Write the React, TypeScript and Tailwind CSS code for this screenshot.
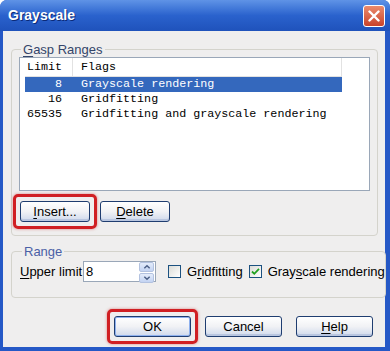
import React from "react";

const ui = "font-['Liberation_Sans',Arial,sans-serif]";
const mono = "font-['Liberation_Mono','Courier_New',monospace]";

function XpButton({ label, u, rest, isDefault }: { label?: string; u?: string; rest?: string; isDefault?: boolean }) {
  return (
    <button
      className={`h-[21px] rounded-[3px] border border-[#1f3d70] bg-gradient-to-b from-[#ffffff] via-[#f1f2f5] to-[#cfd9ec] text-[13px] leading-none text-black ${
        isDefault ? "shadow-[inset_0_0_0_1px_#8fb1ee]" : "shadow-[inset_0_-2px_0_#b9c6e0]"
      }`}
    >
      {u ? <span className="underline underline-offset-2">{u}</span> : null}
      {rest}
      {label}
    </button>
  );
}

// red annotation frame drawn over a button
function Marked({ children }: { children: React.ReactNode }) {
  return (
    <div className="relative flex">
      {children}
      <div className="pointer-events-none absolute -inset-x-[7px] -inset-y-[7px] rounded-[5px] border-[3px] border-[#d01f23] shadow-[0_0_3px_rgba(200,20,20,0.5)]" />
    </div>
  );
}

function Check({ checked }: { checked?: boolean }) {
  return (
    <span className="flex h-[13px] w-[13px] items-center justify-center border border-[#1c5180] bg-gradient-to-br from-[#dcdcd7] to-[#ffffff]">
      {checked && (
        <svg width="9" height="9" viewBox="0 0 9 9">
          <path d="M1 4.5 L3.3 6.8 L8 1.8" fill="none" stroke="#21a121" strokeWidth="1.8" />
        </svg>
      )}
    </span>
  );
}

export default function App() {
  const rows = [
    { limit: "8", flags: "Grayscale rendering", sel: true },
    { limit: "16", flags: "Gridfitting" },
    { limit: "65535", flags: "Gridfitting and grayscale rendering" },
  ];

  return (
    <div className={`${ui} h-[351px] w-[390px] bg-white`}>
      <div className="flex h-full w-full flex-col rounded-t-[7px] bg-[#2558c6]">
        {/* title bar */}
        <div className="flex h-[31px] items-center justify-between rounded-t-[7px] bg-gradient-to-b from-[#5f93e6] via-[#2a62cd] to-[#1f52bb] pl-[8px] pr-[5px]">
          <span className="text-[14px] font-bold text-white [text-shadow:1px_1px_0_#0b2a78]">Grayscale</span>
          <span className="flex h-[22px] w-[22px] items-center justify-center rounded-[3px] border border-white bg-gradient-to-b from-[#ea8a6c] to-[#c9422a]">
            <svg width="12" height="12" viewBox="0 0 12 12">
              <path d="M1.5 1.5 L10.5 10.5 M10.5 1.5 L1.5 10.5" stroke="white" strokeWidth="2.4" strokeLinecap="round" />
            </svg>
          </span>
        </div>

        {/* client area */}
        <div className="mx-[3px] mb-[4px] mr-[5px] flex flex-1 flex-col bg-[#efeeee] px-[8px] pt-[11px] pb-[9px] text-[13px] text-black">
          <fieldset className="mr-[-1px] rounded-[4px] border border-[#d4d3cc] px-[7px] pb-[13px]">
            <legend className="ml-[2px] px-[2px] leading-[15px] text-[#34456a]">
              <span className="underline underline-offset-2">G</span>asp Ranges
            </legend>
            <div className={`${mono} h-[134px] border border-[#9aa7b8] bg-white pl-[5px] text-[11.7px]`}>
              <div className="flex h-[19px] w-[317px] items-center border-b border-[#e2e2e2]">
                <div className="h-full w-[48px] border-r border-[#e2e2e2] pl-[2px] leading-[19px]">Limit</div>
                <div className="h-full flex-1 border-r border-[#e2e2e2] pl-[8px] leading-[19px]">Flags</div>
              </div>
              {rows.map((r) => (
                <div
                  key={r.limit}
                  className={`flex h-[15px] w-[317px] items-center whitespace-pre ${r.sel ? "bg-[#3468bd] text-white" : ""}`}
                >
                  <div className="w-[48px] pr-[11px] text-right">{r.limit}</div>
                  <div className="pl-[8px]">{r.flags}</div>
                </div>
              ))}
            </div>
            <div className="mt-[10px] flex gap-[10px] pl-[1px]">
              <Marked>
                <div className="flex w-[70px] flex-col">
                  <XpButton u="I" rest="nsert..." />
                </div>
              </Marked>
              <div className="flex w-[70px] flex-col">
                <XpButton u="D" rest="elete" />
              </div>
            </div>
          </fieldset>

          <fieldset className="mt-[8px] mr-[-1px] rounded-[4px] border border-[#d4d3cc] pl-[8px] pt-[2px] pb-[15px]">
            <legend className="ml-[2px] px-[2px] leading-[15px] text-[#4a60a6]">Range</legend>
            <div className="flex items-center whitespace-nowrap">
              <span className="w-[63px]">
                <span className="underline underline-offset-2">U</span>pper limit
              </span>
              <div className="flex h-[21px] w-[73px] items-center border border-[#9aa7b8] bg-white pl-[2px] pr-[1px]">
                <span className="flex-1">8</span>
                <div className="flex h-[19px] w-[15px] flex-col gap-px">
                  {["M2 6 L5 3 L8 6", "M2 3 L5 6 L8 3"].map((d) => (
                    <span
                      key={d}
                      className="flex flex-1 items-center justify-center rounded-[2px] border border-[#b3c2e0] bg-gradient-to-b from-[#e4ecfb] to-[#c3d3f2]"
                    >
                      <svg width="10" height="8" viewBox="0 0 10 9">
                        <path d={d} fill="none" stroke="#4b5f86" strokeWidth="1.6" />
                      </svg>
                    </span>
                  ))}
                </div>
              </div>
              <div className="ml-[12px] flex items-center gap-[6px]">
                <Check />
                <span>
                  G<span className="underline underline-offset-2">r</span>idfitting
                </span>
              </div>
              <div className="ml-[6px] flex items-center gap-[6px]">
                <Check checked />
                <span>
                  Gray<span className="underline underline-offset-2">s</span>cale rendering
                </span>
              </div>
            </div>
          </fieldset>

          <div className="mt-[18px] flex justify-end gap-[14px] pr-[4px]">
            <Marked>
              <div className="flex w-[77px] flex-col">
                <XpButton label="OK" isDefault />
              </div>
            </Marked>
            <div className="flex w-[77px] flex-col">
              <XpButton label="Cancel" />
            </div>
            <div className="flex w-[77px] flex-col">
              <XpButton u="H" rest="elp" />
            </div>
          </div>
        </div>
      </div>
    </div>
  );
}
